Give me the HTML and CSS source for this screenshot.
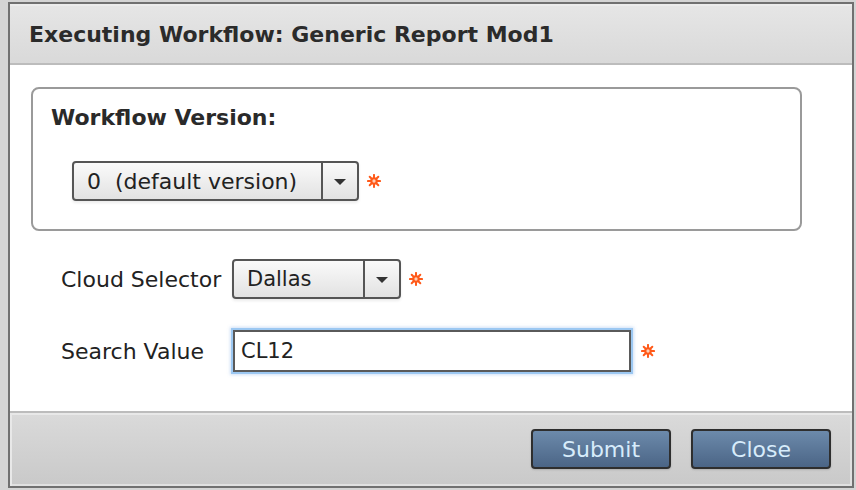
FILE: index.html
```html
<!DOCTYPE html>
<html>
<head>
<meta charset="utf-8">
<link rel="stylesheet" href="styles.css">
</head>
<body>
<div class="backdrop">
  <div class="dialog">
    <div class="header"><span class="title">Executing Workflow: Generic Report Mod1</span></div>
    <div class="content">
      <div class="fieldset">
        <div class="legend">Workflow Version:</div>
        <div class="row">
          <div class="select sel-version">
            <span class="sel-text">0&nbsp;&nbsp;(default version)</span>
            <span class="sel-btn"><span class="tri"></span></span>
          </div>
          <svg class="req" viewBox="0 0 12 12" width="14" height="14"><g stroke="#ff5a1a" stroke-width="1.7" stroke-linecap="round"><line x1="6" y1="0.8" x2="6" y2="11.2"/><line x1="0.8" y1="6" x2="11.2" y2="6"/><line x1="2.3" y1="2.3" x2="9.7" y2="9.7"/><line x1="9.7" y1="2.3" x2="2.3" y2="9.7"/></g><circle cx="6" cy="6" r="3.2" fill="#ff5a1a"/><circle cx="6" cy="6" r="1.4" fill="#ffd0b8"/></svg>
        </div>
      </div>
      <div class="form-row row-cloud">
        <span class="label">Cloud Selector</span>
        <div class="select sel-cloud">
          <span class="sel-text">Dallas</span>
          <span class="sel-btn"><span class="tri"></span></span>
        </div>
        <svg class="req" viewBox="0 0 12 12" width="14" height="14"><g stroke="#ff5a1a" stroke-width="1.7" stroke-linecap="round"><line x1="6" y1="0.8" x2="6" y2="11.2"/><line x1="0.8" y1="6" x2="11.2" y2="6"/><line x1="2.3" y1="2.3" x2="9.7" y2="9.7"/><line x1="9.7" y1="2.3" x2="2.3" y2="9.7"/></g><circle cx="6" cy="6" r="3.2" fill="#ff5a1a"/><circle cx="6" cy="6" r="1.4" fill="#ffd0b8"/></svg>
      </div>
      <div class="form-row row-search">
        <span class="label">Search Value</span>
        <div class="input">CL12</div>
        <svg class="req" viewBox="0 0 12 12" width="14" height="14"><g stroke="#ff5a1a" stroke-width="1.7" stroke-linecap="round"><line x1="6" y1="0.8" x2="6" y2="11.2"/><line x1="0.8" y1="6" x2="11.2" y2="6"/><line x1="2.3" y1="2.3" x2="9.7" y2="9.7"/><line x1="9.7" y1="2.3" x2="2.3" y2="9.7"/></g><circle cx="6" cy="6" r="3.2" fill="#ff5a1a"/><circle cx="6" cy="6" r="1.4" fill="#ffd0b8"/></svg>
      </div>
    </div>
    <div class="footer">
      <div class="btn">Submit</div>
      <div class="btn">Close</div>
    </div>
  </div>
</div>
</body>
</html>
```

FILE: styles.css
```css
html, body {
  margin: 0;
  padding: 0;
}
body {
  width: 856px;
  height: 490px;
  overflow: hidden;
  background: #d4d4d4;
  font-family: "DejaVu Sans", Verdana, sans-serif;
  color: #222;
}
.backdrop {
  padding: 2px 0 0 8px;
}
.dialog {
  width: 842px;
  height: 482px;
  border: 2px solid #707070;
  background: #fff;
  display: flex;
  flex-direction: column;
  box-sizing: content-box;
}
.header {
  height: 59px;
  flex: none;
  border-bottom: 2px solid #bcbcbc;
  background: linear-gradient(#e6e6e6, #d9d9d9);
  box-shadow: inset 0 2px 0 #ececec;
  display: flex;
  align-items: center;
  padding-left: 19px;
}
.title {
  font-weight: bold;
  font-size: 22px;
  color: #2b2b2b;
  margin-top: 1px;
}
.content {
  flex: 1;
  padding: 22px 0 0 21px;
}
.fieldset {
  width: 767px;
  height: 140px;
  border: 2px solid #9a9a9a;
  border-radius: 8px;
  box-sizing: content-box;
}
.legend {
  font-weight: bold;
  font-size: 22px;
  line-height: 26px;
  color: #2a2a2a;
  margin: 16px 0 0 18px;
}
.row {
  display: flex;
  align-items: center;
  margin: 30px 0 0 39px;
}
.select {
  height: 36px;
  border: 2px solid #555;
  border-radius: 4px;
  background: linear-gradient(#fafafa, #e2e2e2);
  box-shadow: 0 2px 3px rgba(0,0,0,0.08);
  display: flex;
  align-items: stretch;
  box-sizing: content-box;
}
.sel-text {
  flex: 1;
  display: flex;
  align-items: center;
  padding-left: 13px;
  font-size: 22px;
  color: #222;
}
.sel-btn {
  width: 34px;
  border-left: 2px solid #555;
  display: flex;
  align-items: center;
  justify-content: center;
}
.tri {
  width: 0;
  height: 0;
  border-left: 6px solid transparent;
  border-right: 6px solid transparent;
  border-top: 6px solid #333;
  margin-top: 2px;
}
.sel-version {
  width: 283px;
}
.sel-cloud {
  width: 165px;
}
.sel-cloud .sel-text {
  font-size: 21px;
}
.req {
  margin-left: 8px;
  flex: none;
}
.form-row {
  display: flex;
  align-items: center;
  padding-left: 30px;
}
.row-cloud {
  margin-top: 28px;
}
.row-search {
  margin-top: 31px;
}
.label {
  font-size: 22px;
  color: #222;
  width: 171px;
  flex: none;
}
.input {
  width: 388px;
  height: 38px;
  border: 2px solid #5a5a5a;
  box-shadow: 0 0 0 2px #9cc8f2, 0 0 3px 3px rgba(120,170,230,0.35);
  display: flex;
  align-items: center;
  padding-left: 6px;
  font-size: 21px;
  color: #222;
  box-sizing: content-box;
  margin-left: 1px;
}
.row-search .req {
  margin-left: 10px;
}
.footer {
  height: 57px;
  flex: none;
  border-top: 2px solid #bcbcbc;
  background: linear-gradient(#dadada, #c9c9c9);
  box-shadow: inset 2px 2px 0 #e8e8e8, inset -2px -2px 0 #e0e0e0;
  display: flex;
  justify-content: flex-end;
  align-items: flex-start;
  padding: 16px 21px 0 0;
  gap: 20px;
  box-sizing: content-box;
}
.btn {
  width: 136px;
  height: 36px;
  border: 2px solid #2e2e2e;
  border-radius: 4px;
  background: linear-gradient(#6c8aab, #4b6586);
  color: #d7ecfb;
  font-size: 22px;
  display: flex;
  align-items: center;
  justify-content: center;
  box-shadow: 0 1px 2px rgba(0,0,0,0.15);
}
```
